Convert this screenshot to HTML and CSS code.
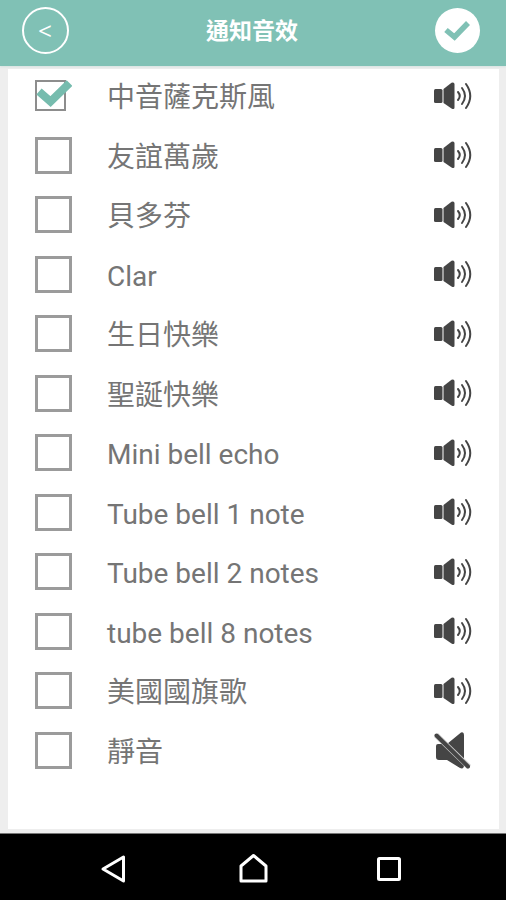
FILE: index.html
```html
<!DOCTYPE html>
<html lang="zh-Hant">
<head>
<meta charset="utf-8">
<meta name="viewport" content="width=device-width, initial-scale=1">
<title>通知音效</title>
<link rel="stylesheet" href="styles.css">
</head>
<body>
<svg class="sprite" aria-hidden="true">
  <symbol id="speaker" viewBox="0 0 40 40">
    <rect x="1" y="13" width="8.500" height="14" rx="1.500" fill="#454545"/>
    <path d="M10.500 13 18.500 6.800Q21.500 5.800 21.500 8.500V31.500Q21.500 34 18.500 32.500L10.500 27Z" fill="#454545"/>
    <g fill="none" stroke="#454545" stroke-width="2" stroke-linecap="round">
      <path d="M25 16Q28.500 20 25 24"/>
      <path d="M29 12Q35 20 29 28"/>
      <path d="M33 8Q41.500 20 33 32"/>
    </g>
  </symbol>
  <symbol id="muted" viewBox="0 0 40 40">
    <path d="M5 14H14L28 2.500Q31 1.500 31 5V35Q31 39.500 27 38L14 30H6Q3 30 3 27V16Q3 14 5 14Z" fill="#454545"/>
    <path d="M3 5 36 37" stroke="#ccc" stroke-width="5.500"/>
    <path d="M3.500 5.500 35 36.500" stroke="#454545" stroke-width="4" stroke-linecap="round"/>
  </symbol>
</svg>
<div class="screen">
  <header class="bar">
    <button class="round back" type="button" aria-label="返回">&lt;</button>
    <h1>通知音效</h1>
    <button class="round done" type="button" aria-label="確定">
      <svg viewBox="0 0 45 45" aria-hidden="true"><path d="M11 22 19.500 29 33 15" fill="none" stroke="#80c1b5" stroke-width="5.500"/></svg>
    </button>
  </header>
  <main>
    <ul class="sounds">
      <li><span class="tick"><input type="checkbox" id="s1" checked><svg viewBox="0 0 37 37" aria-hidden="true"><path d="M4 14.500 15.500 24.500 34.500 6" fill="none" stroke="#76bcae" stroke-width="8"/></svg></span><label for="s1">中音薩克斯風</label><button type="button" aria-label="播放"><svg><use href="#speaker"/></svg></button></li>
      <li><span class="tick"><input type="checkbox" id="s2"></span><label for="s2">友誼萬歲</label><button type="button" aria-label="播放"><svg><use href="#speaker"/></svg></button></li>
      <li><span class="tick"><input type="checkbox" id="s3"></span><label for="s3">貝多芬</label><button type="button" aria-label="播放"><svg><use href="#speaker"/></svg></button></li>
      <li><span class="tick"><input type="checkbox" id="s4"></span><label for="s4">Clar</label><button type="button" aria-label="播放"><svg><use href="#speaker"/></svg></button></li>
      <li><span class="tick"><input type="checkbox" id="s5"></span><label for="s5">生日快樂</label><button type="button" aria-label="播放"><svg><use href="#speaker"/></svg></button></li>
      <li><span class="tick"><input type="checkbox" id="s6"></span><label for="s6">聖誕快樂</label><button type="button" aria-label="播放"><svg><use href="#speaker"/></svg></button></li>
      <li><span class="tick"><input type="checkbox" id="s7"></span><label for="s7">Mini bell echo</label><button type="button" aria-label="播放"><svg><use href="#speaker"/></svg></button></li>
      <li><span class="tick"><input type="checkbox" id="s8"></span><label for="s8">Tube bell 1 note</label><button type="button" aria-label="播放"><svg><use href="#speaker"/></svg></button></li>
      <li><span class="tick"><input type="checkbox" id="s9"></span><label for="s9">Tube bell 2 notes</label><button type="button" aria-label="播放"><svg><use href="#speaker"/></svg></button></li>
      <li><span class="tick"><input type="checkbox" id="s10"></span><label for="s10">tube bell 8 notes</label><button type="button" aria-label="播放"><svg><use href="#speaker"/></svg></button></li>
      <li><span class="tick"><input type="checkbox" id="s11"></span><label for="s11">美國國旗歌</label><button type="button" aria-label="播放"><svg><use href="#speaker"/></svg></button></li>
      <li><span class="tick"><input type="checkbox" id="s12"></span><label for="s12">靜音</label><button type="button" aria-label="靜音"><svg><use href="#muted"/></svg></button></li>
    </ul>
  </main>
  <nav class="system">
    <button type="button" aria-label="Back"><svg viewBox="0 0 32 32" aria-hidden="true"><path d="M3 16 23.500 4V28Z"/></svg></button>
    <button type="button" aria-label="Home"><svg viewBox="0 0 32 32" aria-hidden="true"><path d="M4 28V13L16.500 2.500 29 13V28Z"/></svg></button>
    <button type="button" aria-label="Recent"><svg viewBox="0 0 32 32" aria-hidden="true"><rect x="4.500" y="5.500" width="21" height="21" rx="1"/></svg></button>
  </nav>
</div>
</body>
</html>
```
FILE: styles.css
```css
* {
  box-sizing: border-box;
}

body {
  margin: 0;
  background: #eee;
  color: #757575;
  font-family: Roboto, "Noto Sans CJK TC", sans-serif;
}

button {
  padding: 0;
  border: 0;
  background: none;
  color: inherit;
  font: inherit;
}

svg {
  display: block;
}

.sprite {
  position: absolute;
  width: 0;
  height: 0;
}

.screen {
  display: flex;
  flex-direction: column;
  min-height: 100vh;
}

.bar {
  display: flex;
  align-items: center;
  justify-content: space-between;
  height: 66px;
  padding: 0 26px 6px 22px;
  background: #80c1b5;
  color: #fff;
  box-shadow: 0 1px 2px #d5e2e0;
}

.bar h1 {
  margin: 0;
  padding-top: 4px;
  font-size: 23px;
  line-height: 32px;
  font-weight: 700;
}

.round {
  width: 47px;
  height: 47px;
  border-radius: 50%;
}

.back {
  border: 2px solid #fff;
  font-size: 28px;
  font-weight: 300;
}

.done {
  width: 45px;
  height: 45px;
  background: #fff;
}

main {
  display: flex;
  flex: 1;
  padding: 3px 7px 4px 8px;
}

.sounds {
  display: grid;
  flex: 1;
  grid-auto-rows: 1fr;
  margin: 0;
  padding: 0 26px 46px 27px;
  background: #fff;
  list-style: none;
}

.sounds li {
  display: flex;
  align-items: center;
  padding-bottom: 6px;
}

.sounds label {
  flex: 1;
  margin-left: 35px;
  padding-top: 5px;
  font-size: 28px;
  line-height: 40px;
}

.sounds button svg {
  width: 40px;
  height: 40px;
}

.tick {
  position: relative;
  display: flex;
  align-items: center;
  width: 37px;
  height: 37px;
}

.tick input {
  appearance: none;
  width: 37px;
  height: 37px;
  margin: 0;
  border: 3px solid #9b9b9b;
  background: #fff;
}

.tick input:checked {
  width: 31px;
  height: 31px;
  border: 2px solid #8d8d8d;
}

.tick svg {
  position: absolute;
  inset: 0;
  pointer-events: none;
}

.system {
  display: flex;
  height: 67px;
  padding: 4px 47px 0;
  border-top: 1px solid #777;
  background: #000;
}

.system button {
  display: flex;
  flex: 1;
  align-items: center;
  justify-content: center;
}

.system svg {
  width: 32px;
  height: 32px;
  fill: none;
  stroke: #fff;
  stroke-width: 3;
  stroke-linejoin: round;
}
```
